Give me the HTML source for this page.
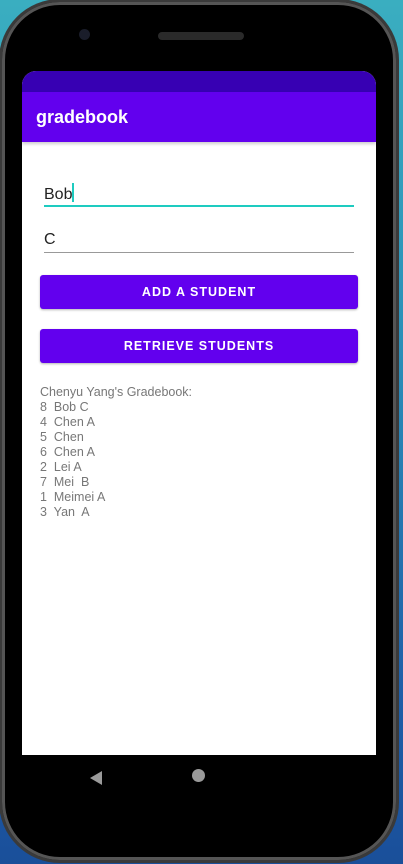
<!DOCTYPE html>
<html><head><style>
body{margin:0;width:403px;height:864px;overflow:hidden;background:linear-gradient(180deg,#3aaec0 0%,#2b8fb8 40%,#1f5fa8 80%,#1a4f9a 100%);font-family:"Liberation Sans",sans-serif;position:relative}
.phone{position:absolute;left:2px;top:2px;width:394px;height:858px;background:#000;border-radius:58px;box-shadow:0 0 0 3px #3a3a3a,inset 0 0 0 3px #555}
.screen{position:absolute;left:22px;top:71px;width:354px;height:684px;background:#fff;border-radius:14px 14px 0 0;overflow:hidden}
.status{height:21px;background:#3700B3}
.bar{height:50px;background:#6200EE;color:#fff;font-size:18px;font-weight:bold;line-height:50px;padding-left:14px;box-shadow:0 2px 3px rgba(0,0,0,.2)}
.field{position:absolute;left:22px;width:310px;font-size:16px;color:#222}
.btn{position:absolute;left:18px;width:318px;height:34px;background:#6200EE;border-radius:3px;color:#fff;font-size:12.5px;font-weight:bold;letter-spacing:1px;text-align:center;line-height:35px;box-shadow:0 1px 2px rgba(0,0,0,.3)}
.list{position:absolute;left:18px;top:314px;font-size:12.5px;color:#777;line-height:15px}
</style></head><body>
<div class="phone">
<div style="position:absolute;left:77px;top:27px;width:11px;height:11px;border-radius:50%;background:#1a1d2a"></div>
<div style="position:absolute;left:156px;top:30px;width:86px;height:8px;border-radius:4px;background:#2a2a2a"></div>
<div style="position:absolute;left:88px;top:769px;width:0;height:0;border-top:7px solid transparent;border-bottom:7px solid transparent;border-right:12px solid #9a9a9a"></div>
<div style="position:absolute;left:190px;top:767px;width:13px;height:13px;border-radius:50%;background:#9a9a9a"></div>
</div>
<div class="screen">
<div class="status"></div>
<div class="bar">gradebook</div>
<div class="field" style="top:112px;height:22px;border-bottom:2px solid #1ecbc0">Bob<span style="display:inline-block;width:2px;height:19px;background:#1ecbc0;vertical-align:-3px"></span></div>
<div class="field" style="top:160px;height:21px;border-bottom:1px solid #999">C</div>
<div class="btn" style="top:204px">ADD A STUDENT</div>
<div class="btn" style="top:258px">RETRIEVE STUDENTS</div>
<div class="list">Chenyu Yang's Gradebook:<br>8&nbsp; Bob C<br>4&nbsp; Chen A<br>5&nbsp; Chen<br>6&nbsp; Chen A<br>2&nbsp; Lei A<br>7&nbsp; Mei&nbsp; B<br>1&nbsp; Meimei A<br>3&nbsp; Yan&nbsp; A</div>
</div>
</body></html>
